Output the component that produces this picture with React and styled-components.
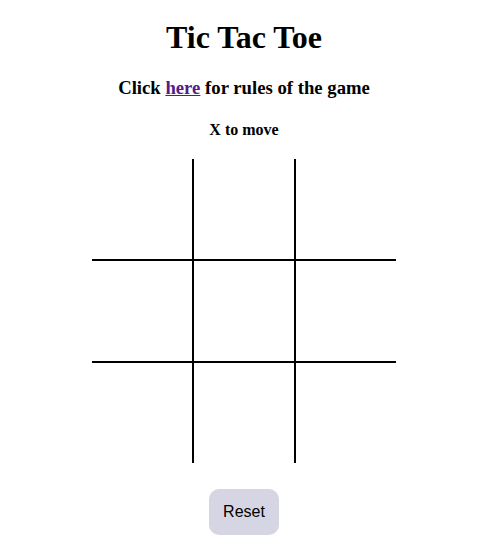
import React, { useState } from "react";
import styled, { createGlobalStyle } from "styled-components";

const GlobalStyle = createGlobalStyle`
  body {
    margin: 8px;
    font-family: "Liberation Serif", "Times New Roman", serif;
    background: #FFFFFF;
    color: #000000;
  }
`;

const Page = styled.div`
  display: flex;
  flex-direction: column;
  align-items: center;
  text-align: center;
  padding-right: 4px;
`;

const Title = styled.h1`
  font-size: 32px;
  margin: 11px 0 21px;
`;

const Rules = styled.h3`
  font-size: 18.72px;
  margin: 0 0 22px;

  a {
    color: #551A8B;
    text-decoration: underline;
  }
`;

const Status = styled.h4`
  font-size: 16px;
  margin: 0 0 20px;
`;

const Board = styled.div`
  display: grid;
  grid-template-columns: repeat(3, 100px);
  grid-template-rows: repeat(3, 100px);
  gap: 2px;
  background: #000000;
`;

const Cell = styled.button`
  background: #FFFFFF;
  border: none;
  padding: 0;
  font-family: "Liberation Sans", Arial, sans-serif;
  font-size: 56px;
  cursor: pointer;
`;

const ResetButton = styled.button`
  margin-top: 26px;
  padding: 14px 14px;
  border: none;
  border-radius: 10px;
  background: #D5D5E4;
  font-family: "Liberation Sans", Arial, sans-serif;
  font-size: 16px;
  line-height: 18px;
  color: #000000;
  cursor: pointer;
`;

export default function App() {
  const [cells, setCells] = useState(Array(9).fill(""));
  const [xNext, setXNext] = useState(true);

  const play = (i) => {
    if (cells[i]) return;
    const next = cells.slice();
    next[i] = xNext ? "X" : "O";
    setCells(next);
    setXNext(!xNext);
  };

  const reset = () => {
    setCells(Array(9).fill(""));
    setXNext(true);
  };

  return (
    <Page>
      <GlobalStyle />
      <Title>Tic Tac Toe</Title>
      <Rules>
        Click <a href="#rules">here</a> for rules of the game
      </Rules>
      <Status>{xNext ? "X" : "O"} to move</Status>
      <Board>
        {cells.map((c, i) => (
          <Cell key={i} onClick={() => play(i)}>
            {c}
          </Cell>
        ))}
      </Board>
      <ResetButton onClick={reset}>Reset</ResetButton>
    </Page>
  );
}
